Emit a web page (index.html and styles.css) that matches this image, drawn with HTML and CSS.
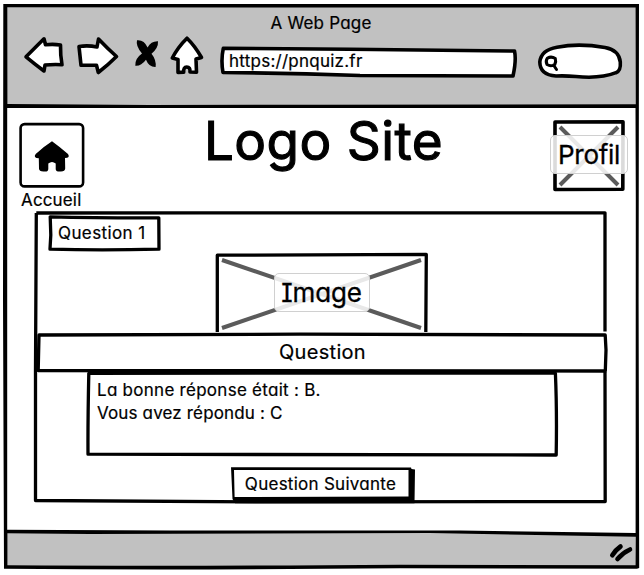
FILE: index.html
```html
<!DOCTYPE html>
<html lang="fr">
<head>
<meta charset="utf-8">
<title>A Web Page</title>
<link rel="stylesheet" href="styles.css">
</head>
<body>
<div class="window">
  <svg class="frame" viewBox="0 0 644 575">
    <path class="chrome" d="M5 6H637V106L5 106Z"/>
    <path class="chrome" d="M5 531Q300 532 420 531.5L637 535V567L400 566.5Q180 568 6 567Z"/>
    <path class="ink" d="M3.3 4L639 4L638.6 300L639.2 568L637 568.8L400 568.3Q180 570.2 4 568.8L3 300ZM7.3 7.3L7.4 104L150 105L320 104.7L635.8 104.3L635.6 7.6ZM7.2 108L635.5 108L635.8 200L635.6 533L460 530.5L170 530.5L7.2 529.8ZM7.4 533.2L90 534L430 533L635.8 536.8L635.6 565.3L400 564.8Q180 566.4 7.4 565.3Z"/>
  </svg>

  <header class="browser">
    <div class="title">A Web Page</div>
    <div class="toolbar">
      <svg class="nav-icons" viewBox="22 32 184 48">
        <g class="outline">
          <path d="M26 56.8L44 38.8L45.5 44.8Q53 43.8 60.5 45Q60.3 55 62 64.7Q53 64.3 45 65L44 71Q36 65 26 56.8Z"/>
          <path d="M79 46.5Q88 45 97 47L98.5 39Q107 48 116.5 56.5Q108 65 98.3 72.5L96.5 65.3L81 65.3Q80 56 79 46.5Z"/>
          <path d="M187 38.2Q195 46 201.5 57.5L196 59L196.5 72.2L190 72Q190.5 67 186.7 67Q183.3 67 183.7 72.2L178 72.4L178 59.5L172.3 58Q178 47 187 38.2Z"/>
        </g>
        <path class="ink" d="M137 40.3Q144 39.5 147.6 47.5Q151 41 158 41.3Q158.5 48 151.5 53.8Q156.5 60 155.6 67Q149 67.3 146 59.7Q141 66.3 135.3 65.7Q134.8 58.5 142 53.5Q135.5 46 137 40.3Z"/>
      </svg>
      <div class="address">
        <svg class="frame" viewBox="219 44 299 35">
          <path class="outline" d="M223.3 48.3L350 49.3L514.5 51Q516.5 60 513 76L360 75.5Q290 73 223 72.5Q220.8 60 223.3 48.3Z"/>
        </svg>
        <span class="url">https://pnquiz.fr</span>
      </div>
      <svg class="search" viewBox="536 40 88 42">
        <path class="outline" d="M556 76Q540 75 539.8 62Q541 50 557 47.2Q579 43 605 47.5Q619 50 620.3 62Q621 71 616 72.7Q600 79 576 76.5Q565 75.5 556 76Z"/>
        <path class="lens" d="M547.5 58Q551.5 56 555.3 58.5Q556.3 61.5 554.8 64.5Q551 66.8 547 64.5Q545.2 61 547.5 58ZM553.5 65L556.5 69.5"/>
      </svg>
    </div>
  </header>

  <section class="top">
    <div class="home">
      <svg class="home-icon" viewBox="19 122 66 66">
        <rect class="card-line" x="20.6" y="124.1" width="62.5" height="62.3" rx="4"/>
        <path class="ink" d="M52 141.2Q60 147 68 154Q70.5 157.8 65 158L65.2 168.5Q65 171.5 61 171.5Q55.5 172 55.7 169L55.7 163.5Q52 160.5 48.3 163.5V169Q48.3 172 44 171.5Q39 171.7 39 168.5L38.8 158.3Q32.8 158 35.7 154Q43 147 52 141.2Z"/>
      </svg>
      <span class="home-label">Accueil</span>
    </div>
    <h1 class="logo">Logo Site</h1>
    <div class="profile">
      <svg class="frame" viewBox="552 119 74 73">
        <path class="outline" d="M555 122L623 121.7L622.8 189.2L555 189.5Z"/>
        <path class="cross" d="M560 127L618 185M618 127L560 185"/>
      </svg>
      <span class="tag tag-profile">Profil</span>
    </div>
  </section>

  <main class="quiz">
    <svg class="frame" viewBox="34 211 574 292">
      <path class="pen" d="M36.3 213L200 212.8L605 212.8L605 331.5M605 372L605.2 501.5L260 501.8L35.5 500.5V370M36.3 213L35.5 370"/>
    </svg>
    <div class="number">
      <svg class="frame" viewBox="48 214 113 38">
        <path class="pen" d="M50.2 216.8Q100 218 158.8 217.8L159 249.2Q100 250.5 50 249.2L50.8 235Z"/>
      </svg>
      <span>Question 1</span>
    </div>
    <div class="image">
      <svg class="frame" viewBox="215 253 213 79">
        <path class="pen" d="M217.3 332L217.3 255.2L426.3 254.4L425.8 332"/>
        <path class="cross" d="M222 260L421 328M421 260L222 328"/>
      </svg>
      <span class="tag tag-image">Image</span>
    </div>
    <div class="question">
      <svg class="frame" viewBox="37 332 571 40">
        <path class="pen" d="M39 335L300 334.2L605.2 335L606 350L605.3 371L38.2 370.6Z"/>
      </svg>
      <span>Question</span>
    </div>
    <div class="answer">
      <svg class="frame" viewBox="86 372 472 85">
        <path class="pen" d="M88.8 373.4L400 373L555.4 373.2Q557 410 556.2 455L88 454.2Q87.8 420 88.8 373.4Z"/>
      </svg>
      <p>La bonne réponse était : B.</p>
      <p>Vous avez répondu : C</p>
    </div>
    <button class="next" type="button">
      <svg class="frame" viewBox="231 466 184 38">
        <path class="paper" d="M233 469H410V498H233Z"/>
        <path class="ink" d="M231 467.3L411 467.5L411.5 469L415 469.5L414.5 503.3L235 503.3L232.5 499ZM234 470L234.6 497L408.5 496.5L408.5 470Z"/>
      </svg>
      <span>Question Suivante</span>
    </button>
  </main>

  <footer class="status">
    <svg class="grip" viewBox="608 541 26 22">
      <path class="slash" d="M612.3 555.3Q615.5 550 620.5 546.5M617.5 559Q622.5 553 630 549.5"/>
    </svg>
  </footer>
</div>
</body>
</html>
```
FILE: styles.css
```css
* { box-sizing: border-box; }

body {
  margin: 0;
  background: #fff;
  color: #000;
  font: 17px/23px Inter, "Open Sans", sans-serif;
  font-feature-settings: "cv11", "cv08";
  -webkit-text-stroke: 0.2px #000;
}

p, h1 { margin: 0; }

.window {
  position: relative;
  width: 644px;
  height: 575px;
  overflow: hidden;
  display: flex;
  flex-direction: column;
}

/* Hand-drawn borders behind each box */
.frame {
  position: absolute;
  inset: 0;
  width: 100%;
  height: 100%;
  overflow: visible;
}

.chrome { fill: #c1c1c1; }
.paper { fill: #fff; }
.ink { fill: #000; fill-rule: evenodd; }
.outline { fill: #fff; stroke: #000; stroke-width: 3.6; stroke-linejoin: round; }
.pen { fill: none; stroke: #000; stroke-width: 3.3; stroke-linejoin: round; }
.card-line { fill: #fff; stroke: #000; stroke-width: 2.6; }
.lens { fill: none; stroke: #000; stroke-width: 3; stroke-linecap: round; stroke-linejoin: round; }
.slash { fill: none; stroke: #000; stroke-width: 4.6; stroke-linecap: round; }
.cross { fill: none; stroke: #5b5b5b; stroke-width: 4; }

.browser {
  position: relative;
  height: 108px;
  padding-top: 12px;
}

.title {
  text-align: center;
  padding-right: 2px;
  letter-spacing: 0.2px;
}

.toolbar {
  display: flex;
  align-items: flex-start;
  padding-left: 22px;
}

.nav-icons { width: 184px; height: 48px; margin-top: -3px; }

.address {
  position: relative;
  width: 299px;
  height: 35px;
  margin: 9px 0 0 13px;
  padding: 6px 0 0 10px;
}

.url { position: relative; letter-spacing: 0.25px; }

.search { width: 88px; height: 42px; margin: 5px 0 0 18px; }

.top {
  position: relative;
  height: 103px;
  display: flex;
  align-items: flex-start;
  padding: 11px 18px 0 19px;
}

.home { width: 66px; padding-top: 3px; }
.home-icon { display: block; width: 66px; height: 66px; }
.home-label { display: block; padding: 1px 0 0 2px; letter-spacing: 0.15px; white-space: nowrap; }

.logo {
  flex: 1;
  padding: 1px 0 0 10px;
  text-align: center;
  font-size: 53px;
  font-weight: 400;
  line-height: 42px;
  letter-spacing: 0.4px;
  -webkit-text-stroke: 1.1px #000;
  stroke-linejoin: round;
}

.profile {
  position: relative;
  width: 74px;
  height: 73px;
  display: flex;
  align-items: center;
  justify-content: center;
}

.tag {
  position: relative;
  top: -1px;
  flex: none;
  display: flex;
  align-items: center;
  justify-content: center;
  height: 39px;
  border: 1px solid #d0d0d0;
  border-radius: 5px;
  background: rgba(255, 255, 255, 0.86);
  font-size: 26px;
  -webkit-text-stroke-width: 0.3px;
}

.tag-profile { width: 78px; letter-spacing: -0.3px; }
.tag-image { top: 0; width: 96px; letter-spacing: -0.2px; }

.quiz {
  position: relative;
  width: 574px;
  height: 292px;
  margin-left: 34px;
  padding-top: 3px;
}

.number, .image, .question, .answer, .next { position: relative; }
.number span, .question span, .answer p, .next span { position: relative; }

.number { width: 113px; height: 38px; margin-left: 14px; padding: 8px 0 0 10px; letter-spacing: 0.4px; }

.image {
  width: 213px;
  height: 79px;
  margin: 1px 0 0 181px;
  display: flex;
  align-items: center;
  justify-content: center;
}

.question {
  width: 571px;
  height: 40px;
  margin-left: 3px;
  display: flex;
  align-items: center;
  justify-content: center;
  font-size: 20px;
  letter-spacing: 0.3px;
}

.answer { width: 472px; height: 85px; margin-left: 52px; padding: 7px 0 0 11px; letter-spacing: 0.27px; }
.answer p + p { letter-spacing: 0.15px; }

.next {
  display: block;
  width: 184px;
  height: 38px;
  margin: 9px 0 0 197px;
  padding: 0 5px 2px 0;
  border: 0;
  background: none;
  color: inherit;
  font: inherit;
  font-feature-settings: inherit;
  letter-spacing: 0.27px;
}

.status {
  position: relative;
  flex: 1;
  display: flex;
  justify-content: flex-end;
  padding: 38px 10px 0 0;
}

.grip { width: 26px; height: 22px; }
```
